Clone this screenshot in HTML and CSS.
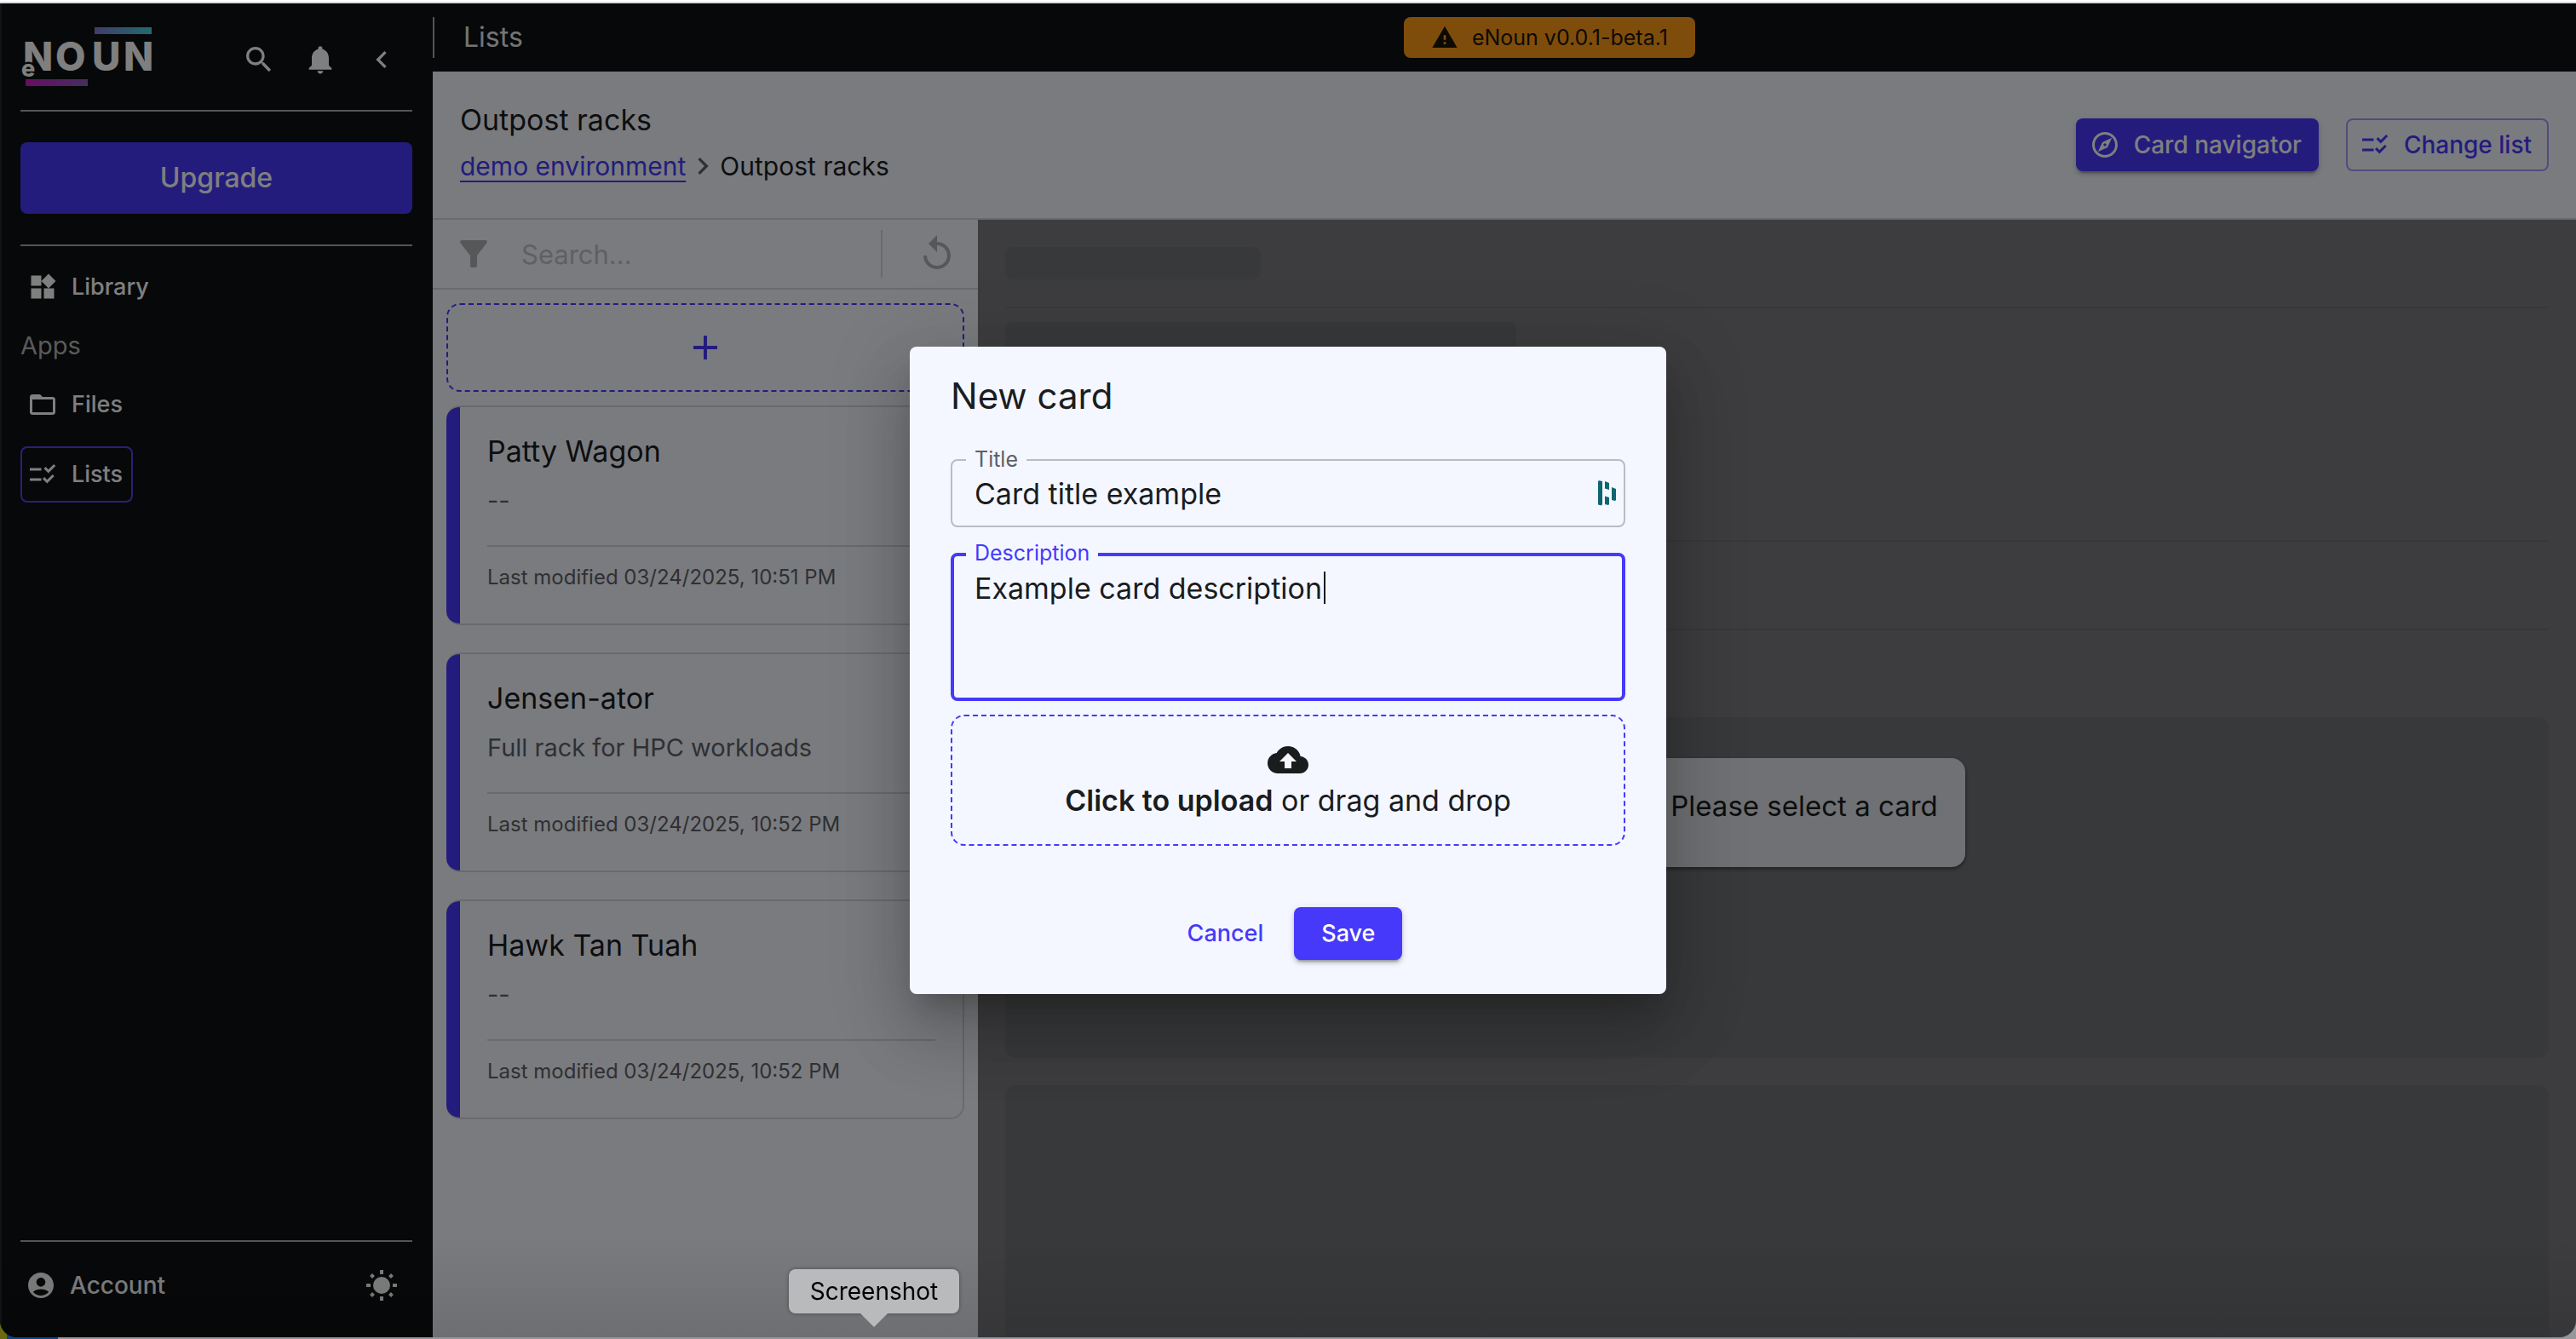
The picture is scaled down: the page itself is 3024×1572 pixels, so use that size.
FILE: index.html
```html
<!DOCTYPE html>
<html lang="en">
<head>
<meta charset="utf-8">
<meta name="viewport" content="width=device-width, initial-scale=1">
<title>eNoun - Lists</title>
<link rel="stylesheet" href="styles.css">
</head>
<body>
<svg class="sprite" aria-hidden="true">
  <symbol id="i-checklist" viewBox="0 0 24 24"><path d="M16.54 11 13 7.46l1.41-1.41 2.12 2.12 4.24-4.24 1.41 1.41L16.54 11zM11 7H2v2h9V7zm10.18 6.34-1.41-1.41-4.24 4.24-2.12-2.12L12 15.46 15.54 19l5.64-5.66zM11 15H2v2h9v-2z"/></symbol>
</svg>
<div class="app">
  <aside class="sidebar">
    <div class="brand">
      <svg class="logo" viewBox="0 0 156 72" role="img" aria-label="eNoun">
        <defs>
          <linearGradient id="g-top"><stop offset="0" stop-color="#8478d8"/><stop offset="1" stop-color="#3fd8dc"/></linearGradient>
          <linearGradient id="g-bottom"><stop offset="0" stop-color="#c81fc4"/><stop offset="1" stop-color="#8e5cc0"/></linearGradient>
        </defs>
        <rect x="87" y="0" width="67" height="8" fill="url(#g-top)"/>
        <rect x="6" y="61" width="73" height="8" fill="url(#g-bottom)"/>
        <text class="logo-word" x="3 41 84 121" y="51">NOUN</text>
        <text class="logo-e" x="1" y="58">e</text>
      </svg>
      <div class="brand-tools">
        <button class="icon-btn" aria-label="Search"><svg viewBox="0 0 24 24"><path d="M15.5 14h-.79l-.28-.27C15.41 12.59 16 11.11 16 9.5 16 5.91 13.09 3 9.5 3S3 5.91 3 9.5 5.91 16 9.5 16c1.61 0 3.09-.59 4.23-1.57l.27.28v.79l5 4.99L20.49 19l-4.99-5zm-6 0C7.01 14 5 11.99 5 9.5S7.01 5 9.5 5 14 7.01 14 9.5 11.99 14 9.5 14z"/></svg></button>
        <button class="icon-btn" aria-label="Notifications"><svg viewBox="0 0 24 24"><path d="M12 22c1.1 0 2-.9 2-2h-4c0 1.1.89 2 2 2zm6-6v-5c0-3.07-1.64-5.64-4.5-6.32V4c0-.83-.67-1.5-1.5-1.5s-1.5.67-1.5 1.5v.68C7.63 5.36 6 7.92 6 11v5l-2 2v1h16v-1l-2-2z"/></svg></button>
        <button class="icon-btn" aria-label="Collapse sidebar"><svg viewBox="0 0 24 24"><path d="M15.41 7.41 14 6l-6 6 6 6 1.41-1.41L10.83 12z"/></svg></button>
      </div>
    </div>
    <button class="upgrade">Upgrade</button>
    <nav class="nav">
      <a class="nav-item" href="#library"><svg viewBox="0 0 24 24"><path d="M13 13v8h8v-8h-8zM3 21h8v-8H3v8zM3 3v8h8V3H3zm13.66-1.31L11 7.34 16.66 13l5.66-5.66-5.66-5.65z"/></svg>Library</a>
      <h2 class="nav-title">Apps</h2>
      <a class="nav-item" href="#files"><svg viewBox="0 0 24 24"><path d="M20 6h-8l-2-2H4c-1.1 0-1.99.9-1.99 2L2 18c0 1.1.9 2 2 2h16c1.1 0 2-.9 2-2V8c0-1.1-.9-2-2-2zm0 12H4V8h16v10z"/></svg>Files</a>
      <a class="nav-item current" href="#lists" aria-current="page"><svg><use href="#i-checklist"/></svg>Lists</a>
    </nav>
    <div class="account">
      <a class="nav-item" href="#account"><svg viewBox="0 0 24 24"><path d="M12 2C6.48 2 2 6.48 2 12s4.48 10 10 10 10-4.48 10-10S17.52 2 12 2zm0 4c1.93 0 3.5 1.57 3.5 3.5S13.93 13 12 13s-3.5-1.57-3.5-3.5S10.07 6 12 6zm0 14c-2.03 0-4.43-.82-6.14-2.88C7.55 15.8 9.68 15 12 15s4.45.8 6.14 2.12C16.43 19.18 14.03 20 12 20z"/></svg>Account</a>
      <button class="icon-btn" aria-label="Light mode"><svg viewBox="0 0 40 40"><circle cx="20" cy="20" r="10"/><path class="rays" d="M20 2v5M20 33v5M2 20h5M33 20h5M7.5 7.5l3 3M29.5 29.500l3 3M7.5 32.500l3-3M29.5 10.500l3-3"/></svg></button>
    </div>
  </aside>

  <div class="main">
    <header class="topbar">
      <h1 class="topbar-title">Lists</h1>
      <div class="version"><svg viewBox="0 0 24 24"><path d="M1 21h22L12 2 1 21zm12-3h-2v-2h2v2zm0-4h-2v-4h2v4z"/></svg>eNoun v0.0.1-beta.1</div>
      <span></span>
    </header>

    <div class="subheader">
      <div>
        <h2 class="page-title">Outpost racks</h2>
        <nav class="crumbs" aria-label="Breadcrumb">
          <a href="#demo">demo environment</a>
          <svg viewBox="0 0 24 24"><path d="M10 6 8.59 7.41 13.17 12l-4.58 4.59L10 18l6-6z"/></svg>
          <span>Outpost racks</span>
        </nav>
      </div>
      <div class="actions">
        <button class="btn contained"><svg viewBox="0 0 24 24"><path d="M12 2C6.48 2 2 6.48 2 12s4.48 10 10 10 10-4.48 10-10S17.52 2 12 2zm0 18c-4.41 0-8-3.59-8-8s3.59-8 8-8 8 3.59 8 8-3.59 8-8 8zm-5.5-2.5 7.51-3.49L17.5 6.5 9.99 9.99 6.5 17.5zm5.5-6.6c.61 0 1.1.49 1.1 1.1s-.49 1.1-1.1 1.1-1.1-.49-1.1-1.1.49-1.1 1.1-1.1z"/></svg>Card navigator</button>
        <button class="btn outlined"><svg><use href="#i-checklist"/></svg>Change list</button>
      </div>
    </div>

    <div class="workspace">
      <section class="list-pane">
        <div class="search">
          <svg viewBox="0 0 24 24"><path d="M4.25 5.61C6.27 8.2 10 13 10 13v6c0 .55.45 1 1 1h2c.55 0 1-.45 1-1v-6s3.72-4.8 5.74-7.39c.51-.66.04-1.61-.79-1.61H5.04c-.83 0-1.3.95-.79 1.61z"/></svg>
          <input type="search" placeholder="Search..." aria-label="Search cards">
          <button class="reset" aria-label="Reset"><svg viewBox="0 0 24 24"><path d="M12 5V1L7 6l5 5V7c3.31 0 6 2.69 6 6s-2.69 6-6 6-6-2.69-6-6H4c0 4.42 3.58 8 8 8s8-3.58 8-8-3.58-8-8-8z"/></svg></button>
        </div>
        <div class="cards">
          <button class="add-card" aria-label="Add card"><svg viewBox="0 0 24 24"><path d="M19 13h-6v6h-2v-6H5v-2h6V5h2v6h6v2z"/></svg></button>
          <div class="stack">
            <article class="card">
              <h3>Patty Wagon</h3>
              <p>--</p>
              <footer>Last modified 03/24/2025, 10:51 PM</footer>
            </article>
            <article class="card">
              <h3>Jensen-ator</h3>
              <p>Full rack for HPC workloads</p>
              <footer>Last modified 03/24/2025, 10:52 PM</footer>
            </article>
            <article class="card">
              <h3>Hawk Tan Tuah</h3>
              <p>--</p>
              <footer>Last modified 03/24/2025, 10:52 PM</footer>
            </article>
          </div>
        </div>
      </section>

      <section class="detail">
        <div class="skeleton">
          <div class="sk-row"><div class="sk-line short"></div></div>
          <div class="sk-row tall"><div class="sk-line"></div></div>
          <div class="sk-row gap"></div>
          <div class="sk-block"></div>
          <div class="sk-block"></div>
        </div>
        <div class="detail-cover">
          <p class="notice"><svg viewBox="0 0 24 24"><path d="M20 11H7.83l5.59-5.59L12 4l-8 8 8 8 1.41-1.41L7.83 13H20v-2z"/></svg>Please select a card</p>
        </div>
      </section>
    </div>
  </div>

  <div class="backdrop">
    <form class="dialog" role="dialog" aria-modal="true" aria-labelledby="dialog-title">
      <h2 id="dialog-title">New card</h2>
      <div class="field">
        <label for="card-title">Title</label>
        <input id="card-title" type="text" value="Card title example">
        <svg class="dashlane" viewBox="0 0 22 30"><path d="M0 1.500Q0 0 1.500.2L5 1v27l-1 1.500L0 28.500zM8 1l5 2v8l-5-1.500zM8 18.500l5 1.500v8l-1 1L8 28zM16 8l5 2v13l-1 1-4-1z"/></svg>
      </div>
      <div class="field focused">
        <label for="card-description">Description</label>
        <textarea id="card-description">Example card description</textarea>
        <span class="caret"></span>
      </div>
      <label class="upload">
        <input type="file">
        <svg viewBox="0 0 24 24"><path d="M19.35 10.04C18.67 6.59 15.64 4 12 4 9.11 4 6.6 5.64 5.35 8.04 2.34 8.36 0 10.91 0 14c0 3.31 2.69 6 6 6h13c2.76 0 5-2.24 5-5 0-2.64-2.05-4.78-4.65-4.96zM14 13v4h-4v-4H7l5-5 5 5h-3z"/></svg>
        <span><b>Click to upload</b> or drag and drop</span>
      </label>
      <div class="dialog-actions">
        <button type="button" class="btn text">Cancel</button>
        <button type="button" class="btn contained">Save</button>
      </div>
    </form>
  </div>
</div>
<div class="tooltip" role="tooltip">Screenshot</div>
</body>
</html>
```
FILE: styles.css
```css
:root {
  --primary: #4639fa;
  --surface: #f4f7ff;
  --ink: #1b1c1e;
  --muted: #5f6064;
  --line: #d3d5db;
  --dark: #0e1113;
  --on-dark: #fff;
}

* { box-sizing: border-box; }

html, body { height: 100%; }

body {
  margin: 0;
  padding: 4px 0 2px;
  background:
    linear-gradient(#fff 2px, #dcdcdc 2px) top / 100% 4px no-repeat,
    linear-gradient(90deg, #6b6a10 8px, #0a468c 8px) bottom left / 68px 24px no-repeat,
    #96979a;
  color: var(--ink);
  font: 28px/40px Inter, "Liberation Sans", sans-serif;
}

h1, h2, h3, p { margin: 0; font-weight: 400; }
svg { display: block; flex: none; width: 36px; height: 36px; fill: currentColor; }
button, input, textarea { font: inherit; color: inherit; margin: 0; padding: 0; border: 0; background: none; }
button { display: flex; align-items: center; justify-content: center; cursor: pointer; }
input, textarea { outline: 0; }
.sprite { position: absolute; width: 0; height: 0; }

.app {
  position: relative;
  display: flex;
  height: 100%;
  overflow: hidden;
  border-radius: 0 0 20px 20px;
  background: var(--dark);
}

/* Sidebar */
.sidebar {
  display: flex;
  flex-direction: column;
  flex: none;
  width: 508px;
  padding: 28px 24px;
  background: var(--dark);
  box-shadow: inset 2px 0 #24272a;
  color: var(--on-dark);
}

.brand {
  display: flex;
  align-items: center;
  justify-content: space-between;
  padding-bottom: 25px;
  border-bottom: 2px solid #a9a9a9;
}
.logo { width: 156px; height: 72px; }
.logo-word { font: 800 46px Inter, sans-serif; }
.logo-e { font: 800 27px Inter, sans-serif; stroke: var(--dark); stroke-width: 5px; paint-order: stroke; }
.brand-tools { display: flex; gap: 16px; padding: 4px 8px 0 0; }
.icon-btn { width: 56px; height: 56px; }
.icon-btn svg { width: 40px; height: 40px; }

.upgrade {
  height: 84px;
  margin: 36px 0;
  border-radius: 8px;
  background: var(--primary);
  font-size: 32px;
  font-weight: 500;
}

.nav {
  display: flex;
  flex-direction: column;
  align-items: flex-start;
  gap: 16px;
  padding-top: 15px;
  border-top: 2px solid #a9a9a9;
}
.nav-item {
  display: flex;
  align-items: center;
  gap: 16px;
  height: 66px;
  padding: 0 10px 0 6px;
  border: 2px solid transparent;
  border-radius: 8px;
  color: inherit;
  font-size: 27px;
  font-weight: 500;
  text-decoration: none;
}
.nav-item.current { border-color: #5244e8; }
.nav-title { color: #b4b5b7; font-size: 29px; }

.account {
  display: flex;
  align-items: center;
  justify-content: space-between;
  margin-top: auto;
  padding: 18px 8px 0 0;
  border-top: 2px solid #a9a9a9;
}
.account .nav-item { padding-left: 4px; font-size: 28px; }
.rays { stroke: currentColor; stroke-width: 4; }

/* Top bar */
.main { display: flex; flex-direction: column; flex: 1; min-width: 0; }
.topbar {
  display: flex;
  align-items: center;
  justify-content: space-between;
  height: 80px;
  color: var(--on-dark);
}
.topbar-title {
  padding-left: 34px;
  border-left: 2px solid #a9a9a9;
  font-size: 32px;
  line-height: 48px;
  color: #e8e8ea;
}
.version {
  display: flex;
  align-items: center;
  gap: 16px;
  height: 48px;
  padding: 0 32px;
  border-radius: 8px;
  background: #ff9a17;
  color: #1b1408;
  font-size: 25px;
}
.version svg { width: 32px; height: 32px; }

.subheader {
  display: flex;
  align-items: center;
  justify-content: space-between;
  height: 174px;
  padding: 0 32px;
  border-bottom: 2px solid var(--line);
  background: var(--surface);
}
.page-title { font-size: 34px; line-height: 48px; }
.crumbs { display: flex; align-items: center; margin: 10px 0 8px; font-size: 30px; }
.crumbs a { color: var(--primary); text-underline-offset: 6px; text-decoration-thickness: 2px; }
.crumbs svg { width: 40px; height: 40px; color: var(--muted); }
.actions { display: flex; gap: 32px; }

.btn {
  gap: 16px;
  height: 62px;
  padding: 0 20px 0 16px;
  border-radius: 8px;
  font-weight: 500;
  color: var(--primary);
}
.btn.contained {
  background: var(--primary);
  color: #fff;
  box-shadow: 0 6px 2px -4px rgba(0, 0, 0, .2), 0 4px 4px rgba(0, 0, 0, .14), 0 2px 10px rgba(0, 0, 0, .12);
}
.btn.outlined { padding: 0 18px 0 14px; border: 2px solid #a19bf6; }

/* Card list */
.workspace { display: flex; flex: 1; min-height: 0; }
.list-pane { flex: none; width: 640px; background: var(--surface); }
.search {
  display: flex;
  align-items: center;
  height: 82px;
  padding: 0 24px;
  border-bottom: 2px solid var(--line);
  color: #adafb3;
}
.search svg { width: 48px; height: 48px; }
.search input { flex: 1; min-width: 0; height: 56px; margin-left: 32px; font-size: 31px; }
.search input::placeholder { color: #bfc1c7; opacity: 1; }
.reset { padding-left: 40px; border-left: 2px solid var(--line); height: 56px; }

.cards { display: flex; flex-direction: column; gap: 16px; padding: 16px; }
.add-card { height: 104px; border: 2px dashed var(--primary); border-radius: 16px; color: var(--primary); }
.add-card svg { width: 48px; height: 48px; }
.stack { display: flex; flex-direction: column; gap: 32px; }
.card {
  padding: 28px 32px 32px 48px;
  border: 2px solid var(--line);
  border-left: 0;
  border-radius: 16px;
  background: linear-gradient(90deg, var(--primary) 16px, transparent 16px);
}
.card h3 { font-size: 34px; line-height: 48px; }
.card p { margin: 14px 0 32px; color: var(--muted); font-size: 29px; }
.card footer { padding-top: 14px; border-top: 2px solid var(--line); color: var(--muted); font-size: 24px; line-height: 44px; }

/* Detail pane */
.detail { position: relative; flex: 1; min-width: 0; overflow: hidden; background: var(--surface); }
.skeleton { padding: 0 32px; }
.sk-row { height: 104px; padding-top: 32px; border-bottom: 2px solid #dfe1e8; }
.sk-row.tall { height: 274px; padding-top: 16px; }
.sk-line { width: 600px; height: 38px; border-radius: 8px; background: #e3e5ec; }
.sk-line.short { width: 300px; }
.sk-block { height: 400px; border-radius: 12px; background: #e3e5ec; }
.sk-row.gap { margin-bottom: 102px; }
.sk-block + .sk-block { margin-top: 32px; }
.detail-cover {
  position: absolute;
  inset: 0;
  display: flex;
  align-items: center;
  justify-content: center;
  padding-top: 80px;
  background: rgba(0, 0, 0, .5);
}
.notice {
  display: flex;
  align-items: center;
  gap: 16px;
  padding: 32px 32px 48px;
  border-radius: 16px;
  background: #e0e2e8;
  box-shadow: 0 2px 4px rgba(0, 0, 0, .5);
  font-size: 33px;
  line-height: 48px;
}
.notice svg { width: 48px; height: 48px; }

/* Dialog */
.backdrop {
  position: absolute;
  inset: 0;
  display: flex;
  align-items: center;
  justify-content: center;
  background: linear-gradient(transparent calc(100% - 120px), rgba(0, 0, 0, .1)), rgba(0, 0, 0, .5);
}
.dialog {
  width: 888px;
  padding: 34px 48px 40px;
  border-radius: 8px;
  background: var(--surface);
  box-shadow: 0 22px 30px -14px rgba(0, 0, 0, .2), 0 48px 76px 6px rgba(0, 0, 0, .14), 0 18px 92px 16px rgba(0, 0, 0, .12);
}
.dialog h2 { margin-bottom: 50px; font-size: 42px; line-height: 48px; }
.field { position: relative; margin-bottom: 30px; font-size: 34px; }
.field label {
  position: absolute;
  top: -14px;
  left: 18px;
  padding: 0 10px;
  background: var(--surface);
  color: var(--muted);
  font-size: 25px;
  line-height: 28px;
}
.field input, .field textarea { display: block; width: 100%; border: 2px solid #b9bcc4; border-radius: 8px; }
.field input { height: 80px; padding: 0 70px 0 26px; }
.field.focused { margin-bottom: 16px; }
.field.focused label { color: var(--primary); }
.field textarea { height: 174px; padding: 18px 24px; border: 4px solid var(--primary); resize: none; }
.caret { position: absolute; top: 22px; left: 438px; width: 2px; height: 38px; background: var(--ink); }
.dashlane { position: absolute; top: 25px; right: 10px; width: 22px; height: 30px; color: #0e6570; }

.upload {
  display: flex;
  flex-direction: column;
  align-items: center;
  height: 154px;
  padding-top: 27px;
  border: 2px dashed var(--primary);
  border-radius: 16px;
  font-size: 34px;
  line-height: 48px;
  cursor: pointer;
}
.upload input { position: absolute; width: 1px; height: 1px; opacity: 0; }
.upload svg { width: 48px; height: 48px; }
.upload b { font-weight: 600; }
.dialog-actions { display: flex; justify-content: center; gap: 20px; margin-top: 72px; }
.dialog-actions .btn { padding: 0 32px; font-size: 27px; }
.dialog-actions .text { padding: 0 16px; }

.tooltip {
  position: fixed;
  bottom: 30px;
  left: 926px;
  width: 200px;
  border-radius: 8px;
  background: #b9babc;
  box-shadow: 0 0 4px rgba(0, 0, 0, .4);
  color: #000;
  line-height: 52px;
  text-align: center;
}
.tooltip::after {
  content: "";
  position: absolute;
  top: 100%;
  left: 84px;
  border: 16px solid transparent;
  border-top-color: #b9babc;
  border-bottom: 0;
}
```
